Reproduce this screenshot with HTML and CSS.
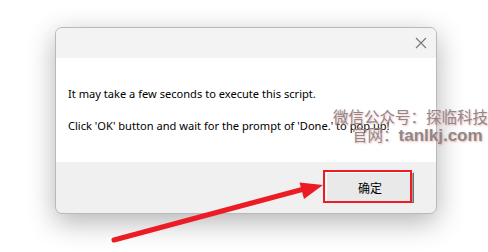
FILE: index.html
```html
<!DOCTYPE html>
<html lang="en">
<head>
    <meta charset="UTF-8">
    <title>Script</title>
    <link rel="stylesheet" href="styles.css">
</head>
<body>
    <div class="stage">
        <div class="dialog">
            <div class="titlebar">
                <svg class="close" width="12" height="12" viewBox="0 0 12 12">
                    <path d="M1 1 L11 11 M11 1 L1 11" stroke="#777" stroke-width="1.1" fill="none"/>
                </svg>
            </div>
            <div class="content">
                <p>It may take a few seconds to execute this script.</p>
                <p>Click 'OK' button and wait for the prompt of 'Done.' to pop up!</p>
            </div>
            <div class="footer">
                <button class="ok-button">确定</button>
            </div>
        </div>
    </div>

    <div class="watermark">
        <div class="wm-line">微信公众号：探临科技</div>
        <div class="wm-line wm-second">官网：<b>tanlkj.com</b></div>
    </div>

    <div class="highlight"></div>

    <svg class="arrow" width="488" height="252" viewBox="0 0 488 252">
        <line x1="114" y1="240" x2="304" y2="189" stroke="#ec1c24" stroke-width="5" stroke-linecap="round"/>
        <polygon points="323,185 299.5,182.5 304,199" fill="#ec1c24"/>
    </svg>
</body>
</html>
```

FILE: styles.css
```css
html, body {
    margin: 0;
    width: 488px;
    height: 252px;
    overflow: hidden;
    background-color: #ffffff;
    font-family: "Noto Sans", "Noto Sans CJK SC", sans-serif;
}

.stage {
    padding: 27px 0 0 55px;
}

.dialog {
    width: 380px;
    height: 185px;
    border: 1px solid #b9b9b9;
    border-radius: 7px;
    box-shadow: 0 8px 28px rgba(0, 0, 0, 0.3);
    overflow: hidden;
    display: flex;
    flex-direction: column;
    background-color: #f0f0f0;
}

.titlebar {
    height: 30px;
    background-color: #f3f3f3;
    display: flex;
    justify-content: flex-end;
    align-items: center;
    padding-right: 9px;
}

.content {
    height: 104px;
    background-color: #ffffff;
    padding: 28px 0 0 12px;
    box-sizing: border-box;
    font-size: 11.1px;
    color: #000000;
}

.content p {
    margin: 0 0 16px 0;
    line-height: 16px;
    white-space: nowrap;
}

.footer {
    flex: 1;
    display: flex;
    justify-content: flex-end;
    align-items: flex-start;
    padding: 10px 22px 0 0;
}

.ok-button {
    width: 88px;
    height: 31px;
    background-color: #e9e9e9;
    border: 1px solid;
    border-color: #ffffff #6e6e6e #6e6e6e #ffffff;
    box-shadow: inset -1px -1px 0 #a0a0a0;
    font-family: "Noto Sans CJK SC", sans-serif;
    font-size: 12px;
    color: #000000;
    padding: 0;
}

.watermark {
    position: absolute;
    left: 333px;
    top: 107px;
    color: #8a8a8a;
    font-family: "Noto Sans CJK SC", sans-serif;
    font-size: 15.5px;
    line-height: 18px;
    text-shadow: 1px 1px 2px rgba(240, 120, 130, 0.55);
    white-space: nowrap;
}

.wm-second {
    padding-left: 19px;
}

.wm-second b {
    font-family: "Liberation Sans", sans-serif;
    font-size: 17px;
}

.highlight {
    position: absolute;
    left: 323px;
    top: 170px;
    width: 85px;
    height: 29px;
    border: 2px solid #ec1c24;
}

.arrow {
    position: absolute;
    left: 0;
    top: 0;
}
```
